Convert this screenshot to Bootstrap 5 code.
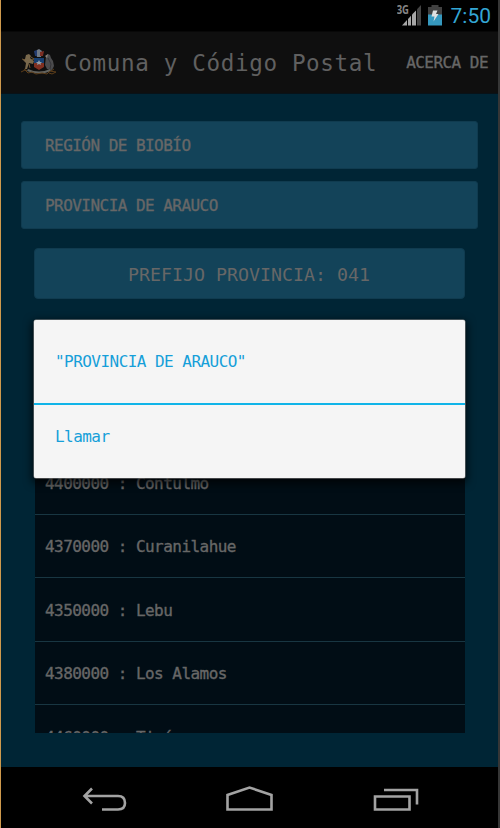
<!DOCTYPE html>
<html lang="es">
<head>
  <meta charset="UTF-8">
  <title>Comuna y Código Postal</title>
  <meta name="viewport" content="width=device-width, initial-scale=1">
  <link href="https://cdn.jsdelivr.net/npm/bootstrap@5.3.0/dist/css/bootstrap.min.css" rel="stylesheet">
  <style>
    body {
      height: 828px;
      overflow: hidden;
      background: #000;
      border-left: 1px solid #cf9a4d;
      border-right: 2px solid #363636;
      font-family: "DejaVu Sans Mono", "Liberation Mono", monospace;
      font-size: 16px;
      letter-spacing: -.54px;
      line-height: 20px;
      color: #676767;
    }
    .status-bar {
      height: 31px;
      padding-right: 7px;
    }
    .clock {
      font-family: Roboto, sans-serif;
      font-size: 21px;
      letter-spacing: 0;
      line-height: 31px;
      color: #33a6d4;
      margin: 2px 0 0 8px;
    }
    .net-label {
      font-family: "Open Sans", sans-serif;
      font-weight: 700;
      letter-spacing: 0;
    }
    .app-bar {
      height: 63px;
      padding: 1px 10px 0 19px;
      background: #0f0f0f;
      border-top: 1px solid #080808;
      border-bottom: 1px solid #081218;
    }
    .app-title {
      font-size: 22.6px;
      letter-spacing: .64px;
      color: #606060;
      margin-left: 7px;
      white-space: nowrap;
    }
    .semi {
      -webkit-text-stroke: .35px currentColor;
      white-space: nowrap;
    }
    .screen {
      height: 673px;
      padding: 27px 20px 0;
      background: #002535;
    }
    .field {
      height: 48px;
      padding: 2px 0 0 23px;
      background: #134359;
      border: 1px solid #103b4f;
      border-radius: 3px;
    }
    .field + .field {
      margin-top: 12px;
    }
    .prefix {
      height: 51px;
      margin: 19px 13px 0;
      padding: 2px 1px 0 0;
      background: #134359;
      border: 1px solid #103b4f;
      border-radius: 4px;
      font-size: 18.3px;
      letter-spacing: 0;
    }
    .codes {
      height: 282px;
      margin: 152px 13px 0 14px;
      background: #010d15;
    }
    .code-row {
      height: 63.5px;
      padding: 3px 0 0 10px;
      border-bottom: 1px solid #183642;
    }
    .dialog {
      position: absolute;
      left: 34px;
      top: 320px;
      width: 431px;
      height: 158px;
      background: #f5f5f5;
      border-radius: 2px;
      box-shadow: 0 0 0 .5px #888, 0 3px 9px 2px rgba(0, 0, 0, .7);
      color: #169fd9;
      white-space: nowrap;
    }
    .dialog-head {
      height: 85px;
      padding-left: 21px;
      border-bottom: 2px solid #10b4e8;
    }
    .dialog-item {
      height: 63px;
      padding-left: 21px;
    }
  </style>
</head>
<body>

  <div class="status-bar d-flex justify-content-end align-items-center">
    <svg width="46" height="31" viewBox="397 0 46 31">
      <text x="396.7" y="14" class="net-label" font-size="11.5" textLength="12.300" lengthAdjust="spacingAndGlyphs" fill="#858585">3G</text>
      <path d="M402 25.500L407 20V25.500z" fill="#a6a6a6"/>
      <path d="M408 19L411 15.800V25.500H408z" fill="#a6a6a6"/>
      <path d="M412 14.600L416 10.400V25.500H412z" fill="#a6a6a6"/>
      <path d="M417 9.300L421 5V25.500H417z" fill="#444"/>
      <path d="M428 7H431.500V5H438.500V7H442V15H428z" fill="#414141"/>
      <path d="M428 14.500H442V25.500H428z" fill="#3598be"/>
      <path d="M433 10.500H437.500L436 14H438.500L433.500 21.500L434.500 16.500H431.500z" fill="#e0e0e0"/>
    </svg>
    <span class="clock">7:50</span>
  </div>

  <header class="app-bar d-flex align-items-center">
    <svg width="37" height="28" viewBox="0 0 37 28">
      <path d="M16 4L17 1L19 0L22 2L21 8H17z" fill="#707985"/>
      <path d="M14 2L17 1V7H15z" fill="#233c70"/>
      <path d="M20 3L24 2L23 7H20z" fill="#7b2e23"/>
      <path d="M5 10L6 6L9 5L11 7L10 9L14 12L13 15L9 14L7 20H5L6 14L3 11z" fill="#79684c"/>
      <path d="M11 8L14 10L12 11M9 15L10 19M2 10L5 11" fill="none" stroke="#705634"/>
      <path d="M26 7L28 5L30 6L31 9L33 12L34 17L32 21L27 20L25 16z" fill="#4b4b4d"/>
      <path d="M25 7L28 5L27 9z" fill="#898078"/>
      <path d="M28 9L31 15L30 20" fill="none" stroke="#343438"/>
      <path d="M14 9H24V14H14z" fill="#173e70"/>
      <path d="M14 14H24V18L19 21L14 18z" fill="#803021"/>
      <path d="M19 11L20 13H22L20.500 14.500L21 16L19 15L17 16L17.500 14.500L16 13H18z" fill="#929da8"/>
      <path d="M8 20Q19 25 30 20L31 22Q19 27 7 22z" fill="#63635e"/>
      <path d="M1 23L5 21L8 24L12 23L16 25L22 24L27 25L30 22L36 23L32 25L29 24M4 20L7 22M34 20L31 22" fill="none" stroke="#5c3d19"/>
    </svg>
    <span class="app-title">Comuna y Código Postal</span>
    <span class="semi ms-auto">ACERCA DE</span>
  </header>

  <main class="screen">
    <div class="field semi d-flex align-items-center">REGIÓN DE BIOBÍO</div>
    <div class="field semi d-flex align-items-center">PROVINCIA DE ARAUCO</div>
    <div class="prefix d-flex align-items-center justify-content-center">PREFIJO PROVINCIA: 041</div>

    <div class="codes semi overflow-hidden">
      <div class="code-row d-flex align-items-center">4400000 : Contulmo</div>
      <div class="code-row d-flex align-items-center">4370000 : Curanilahue</div>
      <div class="code-row d-flex align-items-center">4350000 : Lebu</div>
      <div class="code-row d-flex align-items-center">4380000 : Los Alamos</div>
      <div class="code-row d-flex align-items-center">4460000 : Tirúa</div>
    </div>
  </main>

  <nav>
    <svg class="d-block" width="497" height="61" viewBox="1 767 497 61" fill="none" stroke="#a3a3a3" stroke-width="2.600">
      <path d="M92 788.500L84.500 796L92 803.500M85 796H118Q125 796 125 803Q125 809.500 118 809.500H102"/>
      <path d="M227.500 809.500V795L249.500 787.500L271.500 795V809.500z"/>
      <path d="M375 796.500H409.500V809.500H375zM384 790H417V804.500"/>
    </svg>
  </nav>

  <div class="dialog">
    <div class="dialog-head d-flex align-items-center">"PROVINCIA DE ARAUCO"</div>
    <div class="dialog-item d-flex align-items-center">Llamar</div>
  </div>

  <script src="https://cdn.jsdelivr.net/npm/bootstrap@5.3.0/dist/js/bootstrap.bundle.min.js"></script>
</body>
</html>
